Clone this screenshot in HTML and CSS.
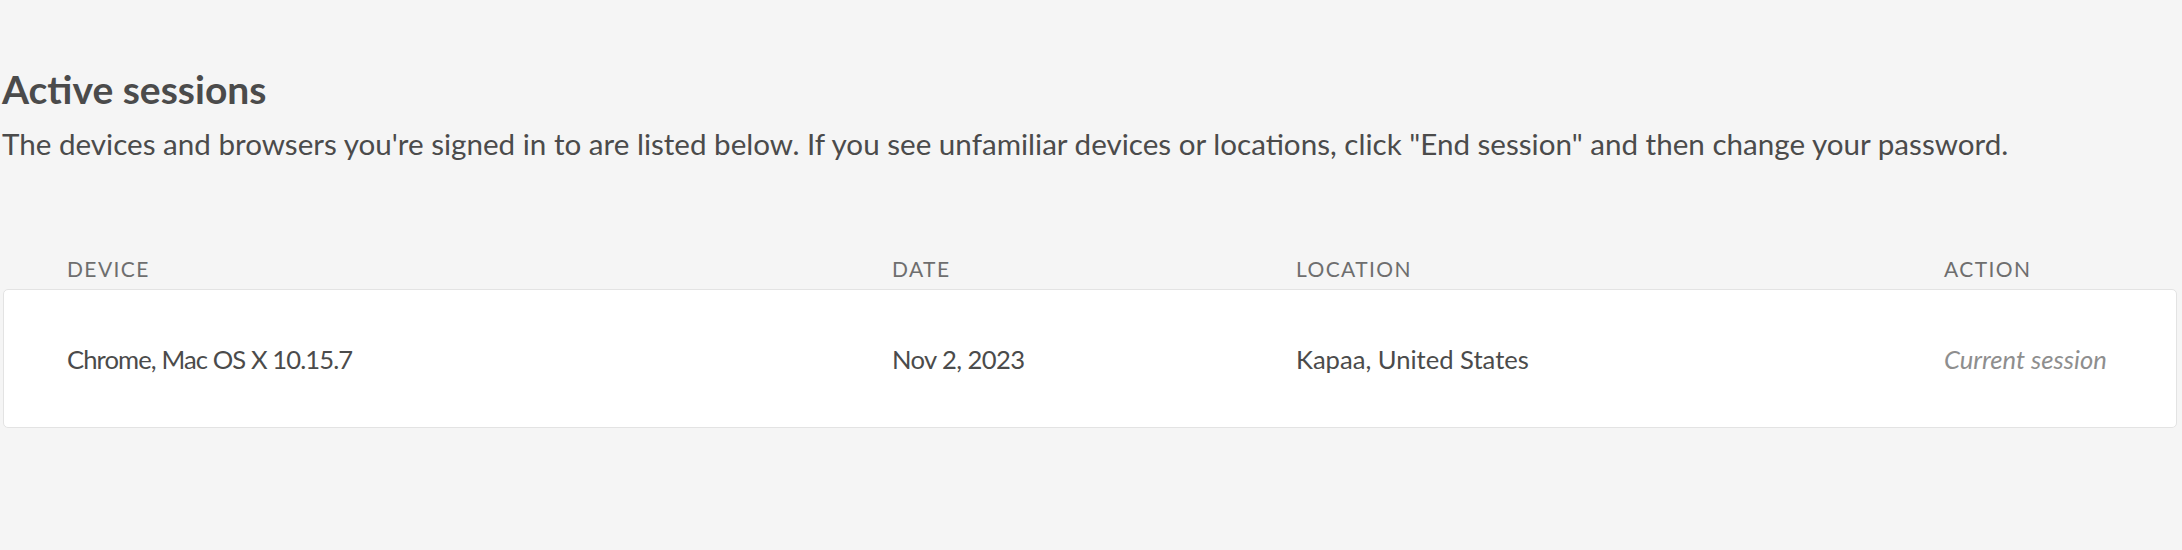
FILE: index.html
```html
<!DOCTYPE html>
<html lang="en">
<head>
<meta charset="utf-8">
<title>Active sessions</title>
<link rel="stylesheet" href="styles.css">
</head>
<body>
<main class="page">
  <h1 class="title">Active sessions</h1>
  <p class="intro">The devices and browsers you're signed in to are listed below. If you see unfamiliar devices or locations, click "End session" and then change your password.</p>
  <section class="sessions">
    <div class="sessions-head">
      <span class="col-label">Device</span>
      <span class="col-label">Date</span>
      <span class="col-label">Location</span>
      <span class="col-label">Action</span>
    </div>
    <div class="session-card">
      <span class="cell cell-device">Chrome, Mac OS X 10.15.7</span>
      <span class="cell cell-narrow">Nov 2, 2023</span>
      <span class="cell">Kapaa, United States</span>
      <span class="cell cell-muted">Current session</span>
    </div>
  </section>
</main>
</body>
</html>
```
FILE: styles.css
```css
html, body {
  margin: 0;
  padding: 0;
  background: #f5f5f5;
}

body {
  font-family: Lato, "Open Sans", "Noto Sans", sans-serif;
  color: #4b4b4b;
}

.page {
  padding: 65px 5px 0 2px;
}

.title {
  margin: 0;
  font-size: 39px;
  line-height: 48px;
  font-weight: 700;
  color: #4b4b4b;
}

.intro {
  margin: 13px 0 0;
  font-size: 29.6px;
  line-height: 36px;
  color: #4b4b4b;
}

.sessions {
  margin-top: 94px;
  margin-left: 1px;
}

.sessions-head,
.session-card {
  display: grid;
  grid-template-columns: 825px 404px 648px 1fr;
  align-items: center;
}

.sessions-head {
  padding-left: 64px;
}

.col-label {
  font-size: 21px;
  line-height: 26px;
  letter-spacing: 1.4px;
  text-transform: uppercase;
  color: #6e6e6e;
}

.session-card {
  margin-top: 7px;
  padding: 53px 0 52px 63px;
  background: #ffffff;
  border: 1px solid #e3e3e3;
  border-radius: 5px;
}

.cell {
  font-size: 25.6px;
  line-height: 32px;
  color: #4b4b4b;
}

.cell-narrow {
  letter-spacing: -0.6px;
}

.cell-device {
  letter-spacing: -0.9px;
}

.cell-muted {
  font-style: italic;
  color: #8e8e8e;
}
```
